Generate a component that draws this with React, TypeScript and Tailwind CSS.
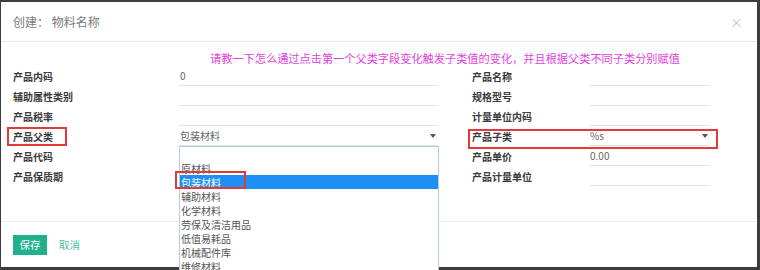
const font = { fontFamily: '"Noto Sans CJK SC", "Noto Sans", sans-serif' };

const leftRows = [
  { label: '产品内码', value: '0' },
  { label: '辅助属性类别', value: '' },
  { label: '产品税率', value: '' },
  { label: '产品父类', value: '包装材料', select: true },
  { label: '产品代码', value: '', noInput: true },
  { label: '产品保质期', value: '', noInput: true },
];

const rightRows = [
  { label: '产品名称', value: '' },
  { label: '规格型号', value: '' },
  { label: '计量单位内码', value: '' },
  { label: '产品子类', value: '%s', select: true },
  { label: '产品单价', value: '0.00' },
  { label: '产品计量单位', value: '' },
];

const options = ['', '原材料', '包装材料', '辅助材料', '化学材料', '劳保及清洁用品', '低值易耗品', '机械配件库', '维修材料'];

function Caret() {
  return <span className="h-0 w-0 border-x-[3px] border-t-[4px] border-x-transparent border-t-[#555]" />;
}

function Field({ value, select, noInput, width }: { value: string; select?: boolean; noInput?: boolean; width: string }) {
  if (noInput) return <div className={width} />;
  return (
    <div className={`${width} flex h-[20px] items-center justify-between border-b border-[#e2e2e2] pl-[1px] pr-[2px] text-[10px] text-[#666]`}>
      <span>{value}</span>
      {select && <Caret />}
    </div>
  );
}

export default function App() {
  return (
    <div className="h-[270px] w-[760px] overflow-hidden bg-[#3e3b3d] pl-[1px] pt-[2px]" style={font}>
      <div className="relative flex h-[265px] w-[756px] flex-col bg-white">
        {/* header */}
        <div className="flex h-[40px] shrink-0 items-center justify-between border-b border-[#e8e8e8] pl-[12px] pr-[14px]">
          <span className="text-[12px] text-[#7a7a7a]">创建： 物料名称</span>
          <span className="text-[13px] leading-none text-[#c4c4c4]">×</span>
        </div>

        {/* body */}
        <div className="h-[179px] shrink-0 pt-[8px]">
          <div className="flex h-[16px] items-center pl-[209px] text-[11.2px] text-[#e03fe0]">
            请教一下怎么通过点击第一个父类字段变化触发子类值的变化，并且根据父类不同子类分别赋值
          </div>
          {leftRows.map((l, i) => {
            const r = rightRows[i];
            return (
              <div key={l.label} className="flex h-[20px] items-center">
                <div className="w-[178px] pl-[12px] text-[10px] font-semibold text-[#3a3a3a]">{l.label}</div>
                <Field value={l.value} select={l.select} noInput={l.noInput} width="w-[259px]" />
                <div className="ml-[34px] w-[117px] text-[10px] font-semibold text-[#3a3a3a]">{r.label}</div>
                <Field value={r.value} select={r.select} width="w-[121px]" />
              </div>
            );
          })}
        </div>

        {/* footer */}
        <div className="flex h-[46px] shrink-0 items-center gap-[12px] border-t border-[#ececec] pl-[12px]">
          <button className="h-[20px] w-[34px] bg-[#22b08c] text-[10.5px] text-white">保存</button>
          <span className="text-[10.5px] text-[#4cbf9c]">取消</span>
        </div>

        {/* open select list */}
        <div className="absolute left-[178px] top-[144px] h-[130px] w-[260px] border border-[#b4cde6] bg-white">
          {options.map((o) => (
            <div
              key={o || 'empty'}
              className={`flex h-[14px] items-center pl-[1px] text-[10px] ${o === '包装材料' ? 'bg-[#1e8ff5] text-white' : 'text-[#555]'}`}
            >
              {o}
            </div>
          ))}
        </div>

        {/* red annotation boxes */}
        <div className="absolute left-[6px] top-[125px] h-[19px] w-[60px] border-2 border-[#e23a3a]" />
        <div className="absolute left-[467px] top-[127px] h-[20px] w-[250px] border-2 border-[#e23a3a]" />
        <div className="absolute left-[174px] top-[169px] h-[18px] w-[71px] border-2 border-[#e23a3a]" />
      </div>
    </div>
  );
}
